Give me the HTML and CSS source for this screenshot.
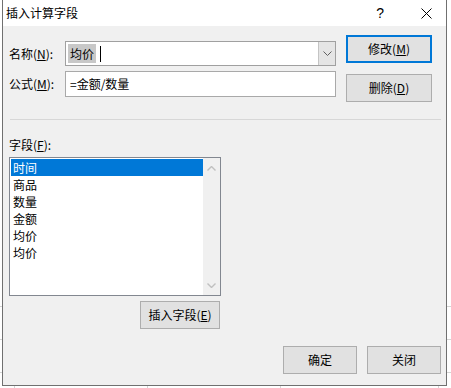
FILE: index.html
```html
<!DOCTYPE html>
<html lang="zh-CN">

<head>
    <meta charset="UTF-8">
    <title>插入计算字段</title>
    <link rel="stylesheet" href="styles.css">
</head>

<body>
    <div class="dialog">
        <!-- Title bar -->
        <div class="titlebar">
            <span class="title">插入计算字段</span>
            <span class="help">?</span>
            <svg class="close" width="11" height="11" viewBox="0 0 11 11">
                <path d="M0.5 0.5 L10.5 10.5 M10.5 0.5 L0.5 10.5" stroke="#000" stroke-width="1" fill="none"/>
            </svg>
        </div>

        <div class="content">
            <div class="top">
                <div class="fields">
                    <label class="label">名称(<u>N</u>):</label>
                    <div class="combo">
                        <span class="combo-text"><span class="selected">均价</span><span class="caret"></span></span>
                        <span class="combo-btn">
                            <svg width="9" height="5" viewBox="0 0 9 5">
                                <path d="M0.5 0.5 L4.5 4.5 L8.5 0.5" stroke="#606060" stroke-width="1" fill="none"/>
                            </svg>
                        </span>
                    </div>
                    <label class="label">公式(<u>M</u>):</label>
                    <div class="input">=金额/数量</div>
                </div>
                <div class="side-buttons">
                    <div class="btn btn-default">修改(<u>M</u>)</div>
                    <div class="btn">删除(<u>D</u>)</div>
                </div>
            </div>

            <div class="separator"></div>

            <div class="field-label">字段(<u>F</u>):</div>
            <div class="listbox">
                <div class="items">
                    <div class="item active">时间</div>
                    <div class="item">商品</div>
                    <div class="item">数量</div>
                    <div class="item">金额</div>
                    <div class="item">均价</div>
                    <div class="item">均价</div>
                </div>
                <div class="scrollbar">
                    <svg width="9" height="5" viewBox="0 0 9 5">
                        <path d="M0.5 4.5 L4.5 0.5 L8.5 4.5" stroke="#c0c0c0" stroke-width="1.4" fill="none"/>
                    </svg>
                    <svg width="9" height="5" viewBox="0 0 9 5">
                        <path d="M0.5 0.5 L4.5 4.5 L8.5 0.5" stroke="#c0c0c0" stroke-width="1.4" fill="none"/>
                    </svg>
                </div>
            </div>

            <div class="btn btn-insert">插入字段(<u>E</u>)</div>

            <div class="bottom-buttons">
                <div class="btn btn-small">确定</div>
                <div class="btn btn-small">关闭</div>
            </div>
        </div>
    </div>
</body>

</html>
```

FILE: styles.css
```css
* {
    margin: 0;
    padding: 0;
    box-sizing: border-box;
    font-family: "Noto Sans CJK SC", "Liberation Sans", sans-serif;
    font-size: 12px;
    color: #000;
}

body {
    width: 451px;
    height: 388px;
    overflow: hidden;
    background-color: #fff;
    background-image:
        linear-gradient(to bottom, transparent 306px, #d4d4d4 306px, #d4d4d4 307px, transparent 307px),
        linear-gradient(to bottom, transparent 339px, #d4d4d4 339px, #d4d4d4 340px, transparent 340px),
        linear-gradient(to bottom, transparent 372px, #d4d4d4 372px, #d4d4d4 373px, transparent 373px),
        linear-gradient(to right, transparent 14px, #d4d4d4 14px, #d4d4d4 15px, transparent 15px),
        linear-gradient(to right, transparent 147px, #d4d4d4 147px, #d4d4d4 148px, transparent 148px),
        linear-gradient(to right, transparent 280px, #d4d4d4 280px, #d4d4d4 281px, transparent 281px),
        linear-gradient(to right, transparent 438px, #d4d4d4 438px, #d4d4d4 439px, transparent 439px);
}

.dialog {
    margin-left: 2px;
    width: 445px;
    height: 386px;
    background-color: #f0f0f0;
    border: 1px solid #707070;
    border-top: none;
}

.titlebar {
    height: 26px;
    background-color: #fff;
    display: flex;
    align-items: center;
    padding-left: 3px;
}

.title {
    line-height: 16px;
}

.help {
    margin-left: auto;
    font-family: "Liberation Sans", sans-serif;
    font-size: 14px;
    margin-right: 37px;
}

.close {
    margin-right: 14px;
}

.content {
    padding-left: 6px;
}

.top {
    display: flex;
}

.fields {
    margin-top: 15px;
    display: grid;
    grid-template-columns: 56px 271px;
    grid-template-rows: 25px 26px;
    row-gap: 5px;
    align-items: center;
}

.label {
    line-height: 16px;
}

.combo {
    height: 25px;
    background-color: #fff;
    border: 1px solid #a0a0a0;
    display: flex;
}

.combo-text {
    flex: 1;
    display: flex;
    align-items: center;
    padding-left: 2px;
}

.selected {
    background-color: #c8c8c8;
    padding: 1px 2px;
    line-height: 17px;
}

.caret {
    width: 1px;
    height: 16px;
    background-color: #000;
    margin-left: 4px;
}

.combo-btn {
    width: 17px;
    background-color: #e5e5e5;
    border-left: 1px solid #c4c4c4;
    display: flex;
    align-items: center;
    justify-content: center;
}

.input {
    height: 26px;
    background-color: #fff;
    border: 1px solid #a9a9a9;
    padding-left: 4px;
    line-height: 24px;
}

.side-buttons {
    margin-top: 9px;
    margin-left: 10px;
    display: flex;
    flex-direction: column;
    gap: 11px;
}

.btn {
    width: 86px;
    height: 28px;
    background-color: #e1e1e1;
    border: 1px solid #adadad;
    display: flex;
    align-items: center;
    justify-content: center;
    line-height: 16px;
}

.btn-default {
    border: 2px solid #0078d7;
}

.separator {
    margin-top: 17px;
    margin-left: 1px;
    width: 431px;
    height: 1px;
    background-color: #d7d7d7;
}

.field-label {
    margin-top: 17px;
    line-height: 16px;
}

.listbox {
    margin-top: 4px;
    width: 212px;
    height: 139px;
    background-color: #fff;
    border: 1px solid #828790;
    display: flex;
}

.items {
    flex: 1;
    padding: 1px 0 0 1px;
}

.item {
    height: 17px;
    line-height: 17px;
    padding-left: 2px;
}

.item.active {
    background-color: #0078d7;
    color: #fff;
}

.scrollbar {
    width: 17px;
    background-color: #f0f0f0;
    display: flex;
    flex-direction: column;
    justify-content: space-between;
    align-items: center;
    padding: 8px 0 7px;
}

.btn-insert {
    margin-top: 5px;
    margin-left: 131px;
    width: 80px;
}

.bottom-buttons {
    margin-top: 17px;
    margin-left: 274px;
    display: flex;
    gap: 10px;
}

.btn-small {
    width: 74px;
}
```
